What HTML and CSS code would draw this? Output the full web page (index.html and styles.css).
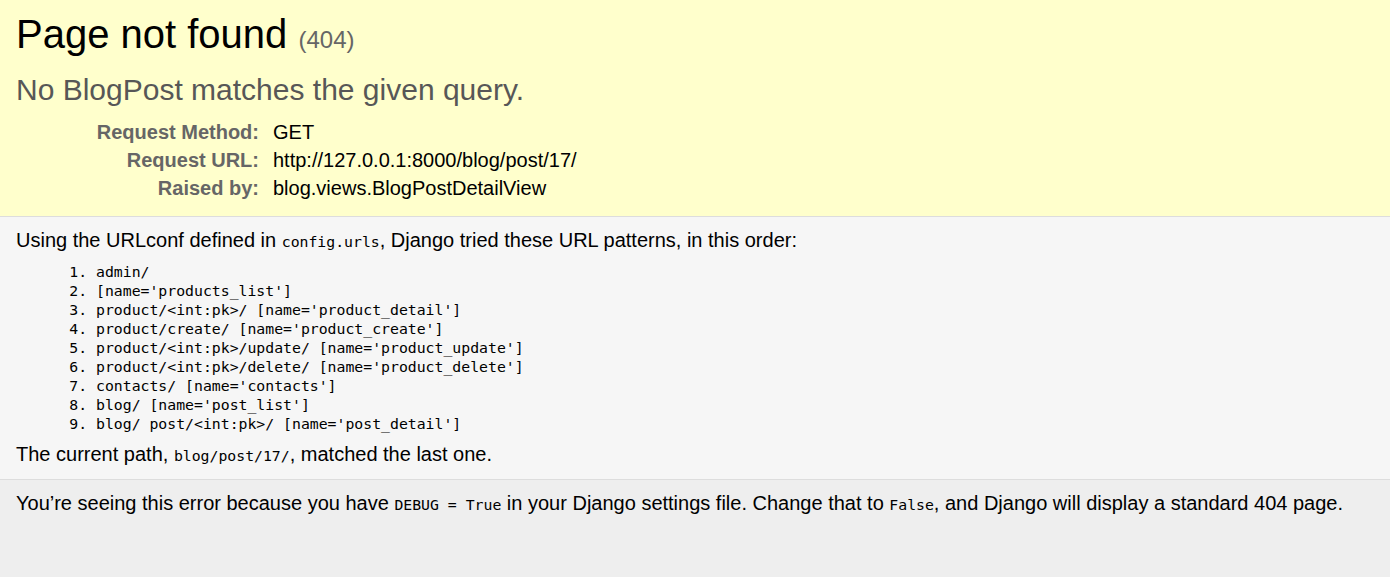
FILE: index.html
```html
<!DOCTYPE html>
<html lang="en">
<head>
  <meta charset="utf-8">
  <title>Page not found at /blog/post/17/</title>
  <link rel="stylesheet" href="styles.css">
</head>
<body class="page">
  <header class="summary">
    <h1 class="title">Page not found <small class="status">(404)</small></h1>
    <pre class="exception-value">No BlogPost matches the given query.</pre>
    <table class="meta">
      <tr>
        <th class="meta-key" scope="row">Request Method:</th>
        <td class="meta-val">GET</td>
      </tr>
      <tr>
        <th class="meta-key" scope="row">Request URL:</th>
        <td class="meta-val">http://127.0.0.1:8000/blog/post/17/</td>
      </tr>
      <tr>
        <th class="meta-key" scope="row">Raised by:</th>
        <td class="meta-val">blog.views.BlogPostDetailView</td>
      </tr>
    </table>
  </header>

  <main class="info">
    <p class="para">Using the URLconf defined in <code class="code">config.urls</code>, Django tried these URL patterns, in this order:</p>
    <ol class="patterns">
      <li class="pattern">admin/</li>
      <li class="pattern">[name='products_list']</li>
      <li class="pattern">product/&lt;int:pk&gt;/ [name='product_detail']</li>
      <li class="pattern">product/create/ [name='product_create']</li>
      <li class="pattern">product/&lt;int:pk&gt;/update/ [name='product_update']</li>
      <li class="pattern">product/&lt;int:pk&gt;/delete/ [name='product_delete']</li>
      <li class="pattern">contacts/ [name='contacts']</li>
      <li class="pattern">blog/ [name='post_list']</li>
      <li class="pattern">blog/ post/&lt;int:pk&gt;/ [name='post_detail']</li>
    </ol>
    <p class="para">The current path, <code class="code">blog/post/17/</code>, matched the last one.</p>
  </main>

  <footer class="explanation">
    <p class="para">You’re seeing this error because you have <code class="code">DEBUG = True</code> in your Django settings file. Change that to <code class="code">False</code>, and Django will display a standard 404 page.</p>
  </footer>
</body>
</html>
```

FILE: styles.css
```css
html, body, h1, pre, p, ol, li, table, th, td, small, code {
  margin: 0;
  padding: 0;
}

.page {
  background: #eee;
  color: #000;
  font-family: "Liberation Sans", Arial, sans-serif;
  font-size: 20px;
  line-height: normal;
}

.summary {
  background: #ffc;
  padding: 12px 16px 13.5px;
  border-bottom: 1px solid #ddd;
}

.title {
  font-size: 40px;
  font-weight: normal;
  margin-bottom: 16px;
}

.status {
  font-size: 60%;
  color: #666;
  font-weight: normal;
}

.exception-value {
  font-family: "Liberation Sans", Arial, sans-serif;
  color: #575757;
  font-size: 30px;
  margin: 10px 0 11.5px;
  white-space: pre-wrap;
}

.meta {
  border: none;
  border-collapse: collapse;
  width: 100%;
}

.meta-key, .meta-val {
  vertical-align: top;
  padding: 2.5px 3px;
  font-size: 20px;
}

.meta-key {
  width: 240px;
  text-align: right;
  color: #666;
  font-weight: bold;
  padding-right: 10px;
}

.meta-val {
  padding-left: 4px;
}

.info {
  display: block;
  background: #f6f6f6;
  padding: 12px 16px 13px;
  border-bottom: 1px solid #ddd;
}

.patterns {
  margin: 10px 80px 10px;
  list-style: decimal outside;
}

.pattern {
  font-family: "DejaVu Sans Mono", "Liberation Mono", monospace;
  font-size: 14.8px;
  line-height: 19px;
}

.code {
  font-family: "DejaVu Sans Mono", "Liberation Mono", monospace;
  font-size: 14.8px;
}

.explanation {
  background: #eee;
  padding: 12px 16px;
}
```
